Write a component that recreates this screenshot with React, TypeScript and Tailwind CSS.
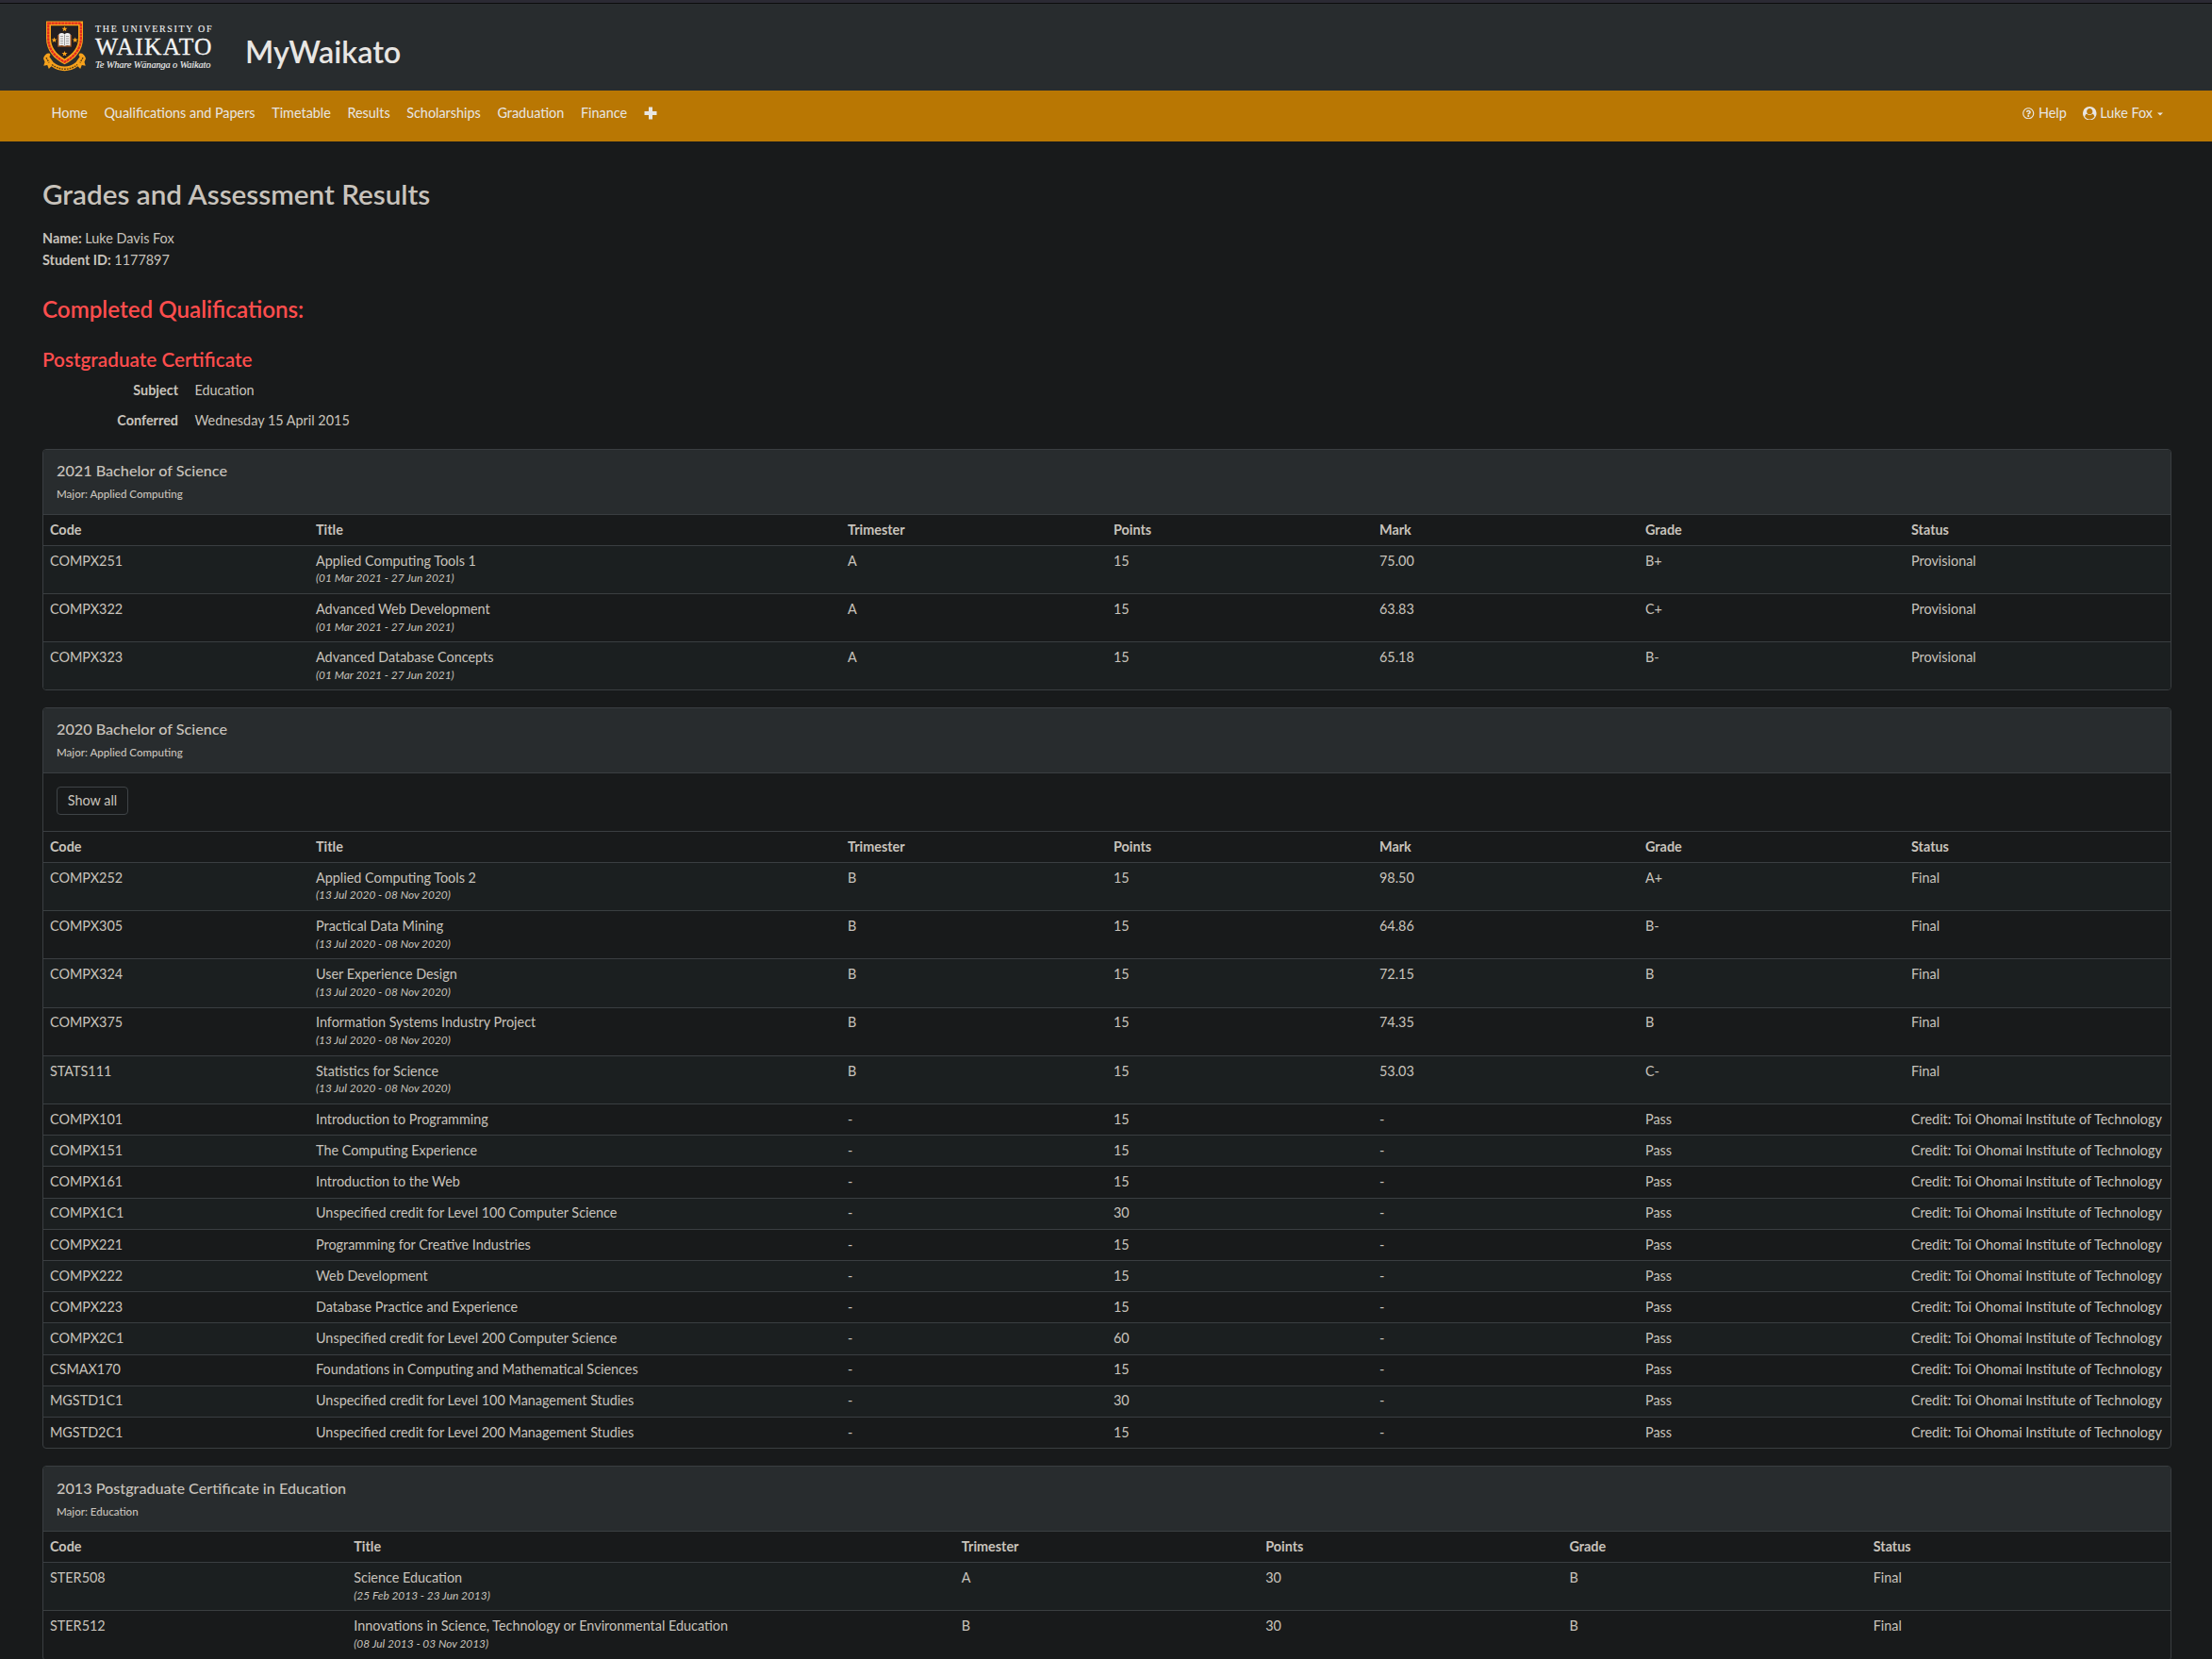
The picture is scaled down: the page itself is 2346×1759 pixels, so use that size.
import React from "react";
import { FaRegQuestionCircle } from "react-icons/fa";

type Row = { code: string; title: string; dates?: string; cells: string[] };

const TOI = "Credit: Toi Ohomai Institute of Technology";
const S21 = "(01 Mar 2021 - 27 Jun 2021)";
const B20 = "(13 Jul 2020 - 08 Nov 2020)";

const paper = (code: string, title: string, dates: string, ...cells: string[]): Row => ({ code, title, dates, cells });
const credit = (code: string, title: string, points: string): Row => ({
  code,
  title,
  cells: ["-", points, "-", "Pass", TOI],
});

const rows2021: Row[] = [
  paper("COMPX251", "Applied Computing Tools 1", S21, "A", "15", "75.00", "B+", "Provisional"),
  paper("COMPX322", "Advanced Web Development", S21, "A", "15", "63.83", "C+", "Provisional"),
  paper("COMPX323", "Advanced Database Concepts", S21, "A", "15", "65.18", "B-", "Provisional"),
];

const rows2020: Row[] = [
  paper("COMPX252", "Applied Computing Tools 2", B20, "B", "15", "98.50", "A+", "Final"),
  paper("COMPX305", "Practical Data Mining", B20, "B", "15", "64.86", "B-", "Final"),
  paper("COMPX324", "User Experience Design", B20, "B", "15", "72.15", "B", "Final"),
  paper("COMPX375", "Information Systems Industry Project", B20, "B", "15", "74.35", "B", "Final"),
  paper("STATS111", "Statistics for Science", B20, "B", "15", "53.03", "C-", "Final"),
  credit("COMPX101", "Introduction to Programming", "15"),
  credit("COMPX151", "The Computing Experience", "15"),
  credit("COMPX161", "Introduction to the Web", "15"),
  credit("COMPX1C1", "Unspecified credit for Level 100 Computer Science", "30"),
  credit("COMPX221", "Programming for Creative Industries", "15"),
  credit("COMPX222", "Web Development", "15"),
  credit("COMPX223", "Database Practice and Experience", "15"),
  credit("COMPX2C1", "Unspecified credit for Level 200 Computer Science", "60"),
  credit("CSMAX170", "Foundations in Computing and Mathematical Sciences", "15"),
  credit("MGSTD1C1", "Unspecified credit for Level 100 Management Studies", "30"),
  credit("MGSTD2C1", "Unspecified credit for Level 200 Management Studies", "15"),
];

const rows2013: Row[] = [
  paper("STER508", "Science Education", "(25 Feb 2013 - 23 Jun 2013)", "A", "30", "B", "Final"),
  paper("STER512", "Innovations in Science, Technology or Environmental Education", "(08 Jul 2013 - 03 Nov 2013)", "B", "30", "B", "Final"),
];

const fullHead = ["Code", "Title", "Trimester", "Points", "Mark", "Grade", "Status"];
const shortHead = ["Code", "Title", "Trimester", "Points", "Grade", "Status"];

function Star({ x, y }: { x: number; y: number }) {
  return (
    <path
      transform={`translate(${x} ${y})`}
      d="M0-3 .8-.95 3-.95 1.25.4 1.9 2.5 0 1.2-1.9 2.5-1.25.4-3-.95-.8-.95Z"
      fill="#f6a21c"
    />
  );
}

function Logo() {
  return (
    <svg width="182" height="56" viewBox="45 21 182 56" role="img" aria-label="The University of Waikato">
      <path d="M46 62c1-4.500 5-6.500 7-5 1.200 1.800-.7 3-.7 3l4.200 6c7.500 6 16.500 6 24 0l4.200-6s-1.900-1.200-.7-3c2-1.500 6 .5 7 5l-1.500 3.700 1.200 4-3.900-.7-1.600 4-2.700-2.700c-8.500 6.500-19.500 6.500-28 0l-2.700 2.700-1.600-4-3.900.7 1.200-4Z" fill="#f6a21c" />
      <path d="M55 68.500c8.500 6.300 19.500 6.300 27 0M49 61l3 5.500M88 61l-3 5.500" fill="none" stroke="#5a3d12" strokeWidth="1.400" strokeDasharray="1.800 1" />
      <path d="M49 22.500h39v18c0 13-8 22-19.500 27.800C57 62.500 49 53.500 49 40.500Z" fill="#f6a21c" />
      <path d="M51.200 24.700h34.600v15.800c0 11.600-7 19.600-17.300 25.200-10.300-5.600-17.300-13.600-17.300-25.200Z" fill="none" stroke="#e5281f" strokeWidth="2.300" strokeDasharray="3 .5" />
      <path d="M54 27.300h29v13.200c0 9.800-5.500 16.500-14.500 21.900C59.500 57 54 50.300 54 40.500Z" fill="#231f20" />
      <path d="M61 37h15v12.800H61Z" fill="#8a4a1c" />
      <path d="M62.500 36c2.300-1.500 4.400-1.300 6 .2 1.600-1.500 3.700-1.700 6-.2v12.500c-2.300-.9-4.400-.8-6 .5-1.600-1.300-3.700-1.400-6-.5Z" fill="#efefef" />
      <path d="M68.500 36.500v12M64 38.500h3M64 41h3M64 43.500h3M64 46h3M70 38.500h3M70 41h3M70 43.500h3M70 46h3" stroke="#8a8a8a" strokeWidth=".8" />
      <Star x={68.500} y={30.800} />
      <Star x={57.500} y={42.500} />
      <Star x={79.700} y={42.500} />
      <Star x={68.500} y={57} />
      <g fill="#f4f4f4" stroke="#f4f4f4" fontFamily='"Liberation Serif", serif'>
        <text x="101" y="33.700" fontSize="10" strokeWidth=".1" textLength="123.500" lengthAdjust="spacing">THE UNIVERSITY OF</text>
        <text x="101" y="57.500" fontSize="25.500" strokeWidth=".3" textLength="123.500" lengthAdjust="spacing">WAIKATO</text>
        <text x="101" y="71.800" fontSize="10.400" strokeWidth=".1" fontStyle="italic" textLength="122.500" lengthAdjust="spacing">Te Whare Wānanga o Waikato</text>
      </g>
    </svg>
  );
}

function UserCircle() {
  return (
    <svg width="14.500" height="14.500" viewBox="0 0 1792 1792" fill="currentColor" fillRule="evenodd">
      <path d="M1523 1339q-22-155-87.5-257.5t-184.5-118.5q-67 74-159.5 115.5t-195.5 41.5-195.5-41.5-159.5-115.5q-119 16-184.5 118.5t-87.5 257.5q106 150 271 237.5t356 87.5 356-87.5 271-237.5zm-243-699q0-159-112.5-271.5t-271.5-112.5-271.5 112.5-112.5 271.5 112.5 271.5 271.5 112.5 271.5-112.5 112.5-271.5zm512 256q0 182-71 347.500t-190.500 286-285.500 191.500-349 71q-182 0-348-71t-286-191-191-286-71-348 71-348 191-286 286-191 348-71 348 71 286 191 191 286 71 348z" />
    </svg>
  );
}

function Cell({ children, wide }: { children: React.ReactNode; wide?: boolean }) {
  return <div className={wide ? "col-span-2 px-[7px]" : "px-[7px] whitespace-nowrap"}>{children}</div>;
}

function rowHeight(row: Row, isLast: boolean) {
  if (row.dates) return isLast ? "h-[49.560px]" : "h-[51.220px] border-b";
  return isLast ? "h-[32.300px]" : "h-[33.200px] border-b";
}

function Results({ head, rows, continues }: { head: string[]; rows: Row[]; continues?: boolean }) {
  const grid = head.length === 7 ? "grid grid-cols-8" : "grid grid-cols-7";
  return (
    <div>
      <div className={`${grid} h-[33px] border-b border-[#3a3e41] pt-[3.700px] font-bold`}>
        {head.map((h) => (
          <Cell key={h} wide={h === "Title"}>{h}</Cell>
        ))}
      </div>
      {rows.map((r, i) => (
        <div
          key={r.code}
          className={`${grid} content-start border-[#3a3e41] pt-[3.700px] ${rowHeight(r, i === rows.length - 1 && !continues)} ${i % 2 === 0 ? "bg-[#1b1f20]" : ""}`}
        >
          <Cell>{r.code}</Cell>
          <Cell wide>
            {r.title}
            {r.dates && <div className="-mt-[1.400px] text-[11.900px] leading-[18px] italic">{r.dates}</div>}
          </Cell>
          {r.cells.map((c, j) => (
            <Cell key={j}>{c}</Cell>
          ))}
        </div>
      ))}
    </div>
  );
}

function Panel({ title, major, children }: { title: string; major: string; children: React.ReactNode }) {
  return (
    <section className="mb-[18px] overflow-hidden rounded-[4px] border border-[#3a3e41]">
      <header className="h-[69px] border-b border-[#3a3e41] bg-[#282c2e] px-[14px] pt-[11.300px] font-medium">
        <h4 className="text-[16.200px] leading-[22px]">{title}</h4>
        <div className="mt-[5.200px] text-[11.550px] leading-[18px]">{major}</div>
      </header>
      {children}
    </section>
  );
}

const links = ["Home", "Qualifications and Papers", "Timetable", "Results", "Scholarships", "Graduation", "Finance"];

export default function App() {
  return (
    <div className='h-[1759px] overflow-hidden bg-[#181a1b] font-["Lato",sans-serif] text-[14.400px] leading-[23px] text-[#c8c3bc]'>
      <div className="h-[4px] border-b border-[#0c0c0d] bg-[#2b2a33]" />
      <div className="flex h-[92px] bg-[#282c2e] pl-[45px]">
        <div className="pt-[17px]"><Logo /></div>
        <div className="ml-[33px] pt-[31px] text-[32.300px] leading-[40px] font-semibold text-[#e8e6e3]">MyWaikato</div>
      </div>
      <nav className="flex h-[54px] items-center bg-[#b97703] pr-[52px] pb-[6.500px] pl-[54.500px] text-[#e8e6e3]">
        <div className="flex items-center gap-[17.600px]">
          {links.map((l) => (
            <a key={l}>{l}</a>
          ))}
          <svg width="14" height="14" viewBox="0 0 14 14" fill="currentColor"><path d="M5 .5h4V5h4.500v4H9v4.500H5V9H.5V5H5Z" /></svg>
        </div>
        <div className="ml-auto flex items-center gap-[17.500px]">
          <a className="flex items-center gap-[4px]"><FaRegQuestionCircle size={12.5} />Help</a>
          <a className="flex items-center gap-[3.500px]">
            <UserCircle />Luke Fox
            <svg className="mt-[3px] ml-[1.500px]" width="6" height="4" viewBox="0 0 6 4" fill="currentColor"><path d="M0 .5h6L3 3.500Z" /></svg>
          </a>
        </div>
      </nav>
      <main className="pr-[43px] pl-[45px]">
        <h1 className="pt-[38px] text-[29.650px] leading-[36px] font-semibold">Grades and Assessment Results</h1>
        <div className="mt-[17px]">
          <div><b>Name:</b> Luke Davis Fox</div>
          <div><b>Student ID:</b> 1177897</div>
        </div>
        <h2 className="mt-[26px] text-[24.200px] leading-[30px] font-semibold text-[#ff4d4d]">Completed Qualifications:</h2>
        <h3 className="mt-[25px] text-[20.700px] leading-[26px] font-semibold text-[#ff4d4d]">Postgraduate Certificate</h3>
        <dl className="mt-[8px] grid grid-cols-[144px_1fr] gap-x-[17.500px] gap-y-[9px]">
          <dt className="text-right font-bold">Subject</dt>
          <dd>Education</dd>
          <dt className="text-right font-bold">Conferred</dt>
          <dd>Wednesday 15 April 2015</dd>
        </dl>
        <div className="mt-[19px]">
          <Panel title="2021 Bachelor of Science" major="Major: Applied Computing">
            <Results head={fullHead} rows={rows2021} />
          </Panel>
          <Panel title="2020 Bachelor of Science" major="Major: Applied Computing">
            <div className="h-[62px] border-b border-[#3a3e41] px-[14px] pt-[14px]">
              <button className="h-[30px] w-[76px] rounded-[4px] border border-[#3f4447] leading-[27px]">Show all</button>
            </div>
            <Results head={fullHead} rows={rows2020} />
          </Panel>
          <Panel title="2013 Postgraduate Certificate in Education" major="Major: Education">
            <Results head={shortHead} rows={rows2013} continues />
          </Panel>
        </div>
      </main>
    </div>
  );
}
